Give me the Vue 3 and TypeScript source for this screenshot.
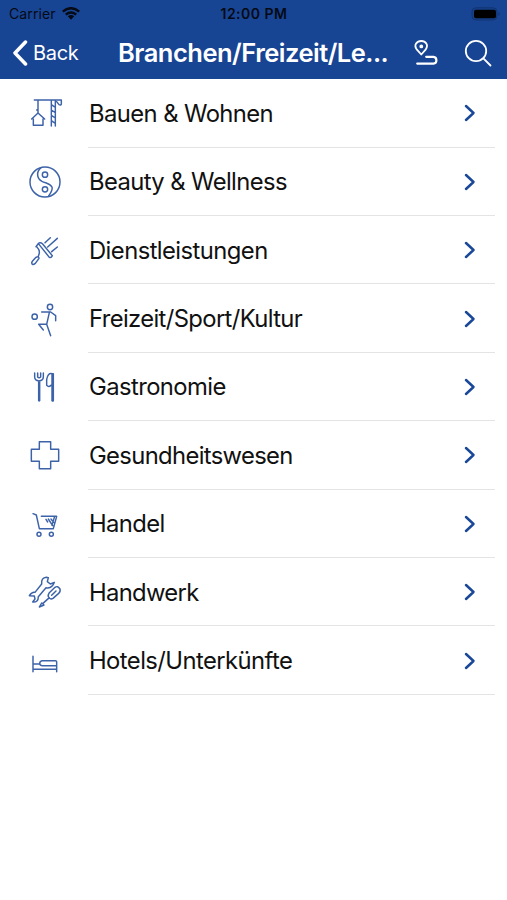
<script setup lang="ts">
interface Category {
  label: string
  spacing: number
  viewBox: string
  paths: string[]
  circles?: [number, number, number][]
}

const categories: Category[] = [
  {
    label: 'Bauen & Wohnen',
    spacing: -0.58,
    viewBox: '0 -5 150 150',
    paths: [
      'M43 31H124V43Q123 48 117 45L110 36M54 33V54Q55 61 50 61M54 57V69M35 88L54 70L74 88M40 88V107H69V88M94 33V109M106 33V109M94 45L106 53M94 61L106 69M94 77L106 85M94 93L106 101',
    ],
  },
  {
    label: 'Beauty & Wellness',
    spacing: -0.6,
    viewBox: '0 -1 150 150',
    paths: ['M63 31C49 43 49 63 66 72C78 78 89 77 96 89C99 97 93 106 86 116'],
    circles: [[75, 74, 45], [75, 52, 8], [75, 96, 8]],
  },
  {
    label: 'Dienstleistungen',
    spacing: -0.56,
    viewBox: '0 -1 150 150',
    paths: [
      'M57 57L88 96Q94 98 97 91L68 56Q60 49 54 56L48 64M50 64L56 72Q61 82 54 94M37 108L48 96Q56 91 57 99L46 114Q36 122 35 112ZM75 52L91 37M83 65L112 39M95 79L112 65',
    ],
  },
  {
    label: 'Freizeit/Sport/Kultur',
    spacing: -0.63,
    viewBox: '0 0 150 150',
    paths: ['M65 54H92L107 65V80M88 56L80 91L92 125M80 91H56L70 108'],
    circles: [[90, 39, 8], [44, 68, 8]],
  },
  {
    label: 'Gastronomie',
    spacing: -0.58,
    viewBox: '0 -1 150 150',
    paths: [
      'M44 32V44Q44 54 57 56Q70 54 70 44V32M53 32V44Q57 49 62 44V32M56 56V115Q57.500 117 59 115V56M96 115V34Q83 31 80 52V69Q87 76 94 68M96 115Q98 117 100 115V34H96',
    ],
  },
  {
    label: 'Gesundheitswesen',
    spacing: -0.65,
    viewBox: '0 0 150 150',
    paths: ['M58 35H92V58H116V94H92V116H58V94H34V58H58Z'],
  },
  {
    label: 'Handel',
    spacing: -0.62,
    viewBox: '0 1 150 150',
    paths: [
      'M39 45L49 49L58 90H100L110 53H64M78 62L83 70M85 61L98 81M93 61L101 71M103 56L96 80',
    ],
    circles: [[57, 107, 6], [94, 107, 6]],
  },
  {
    label: 'Handwerk',
    spacing: -0.68,
    viewBox: '0 -1 150 150',
    paths: [
      'M79 30Q63 31 65 50L45 75Q36 73 28 85L43 86L45 95L38 104Q55 106 55 88L78 61Q96 65 103 45L91 50L82 43L85 31ZM58 119L65 107L72 113ZM69 108L88 91M86 89Q82 86 88 76L105 60Q113 54 120 65Q122 74 116 78L99 93Q91 98 86 89M95 84L108 71',
    ],
  },
  {
    label: 'Hotels/Unterkünfte',
    spacing: -0.56,
    viewBox: '0 -3 150 150',
    paths: ['M39 58V104M39 81H60M39 97H110M110 104V74Q110 71 106 71H66Q59 72 59 80Q60 86 67 86H109'],
  },
]
</script>

<template>
  <main class="screen">
    <header class="top">
      <div class="status">
        <div class="carrier">
          <span class="carrier-name">Carrier</span>
          <svg class="wifi" viewBox="0 0 18 13">
            <path d="M.8 4.6Q9 -2.1 17.200 4.600M3.800 7.600Q9 3.400 14.200 7.600" fill="none" stroke="#050a14" stroke-width="2.5" />
            <path d="M5.8 9.3Q9 6.8 12.2 9.3L9 12.8Z" fill="#050a14" />
          </svg>
        </div>
        <span class="clock">12:00 PM</span>
        <div class="battery-wrap">
          <svg class="battery" viewBox="0 0 30 14">
            <rect x="1" y=".8" width="25" height="12.2" rx="4" fill="#15408a" stroke="#123473" />
            <rect x="3" y="2.8" width="22" height="8.4" rx="2" fill="#000" />
            <path d="M27.5 5Q30 7 27.5 9Z" fill="#123473" />
          </svg>
        </div>
      </div>
      <nav class="bar">
        <button class="back">
          <svg class="back-icon" viewBox="0 0 16 26">
            <path d="M13.5 2L3 13L13.5 24" fill="none" stroke="#fff" stroke-width="3.5" stroke-linecap="round" stroke-linejoin="round" />
          </svg>
          <span class="back-label">Back</span>
        </button>
        <h1 class="title">Branchen/Freizeit/Le...</h1>
        <svg class="route" viewBox="0 0 24 26">
          <path d="M7.3 14.5L2.9 9.7C-.8 4.8 3 1 7.3 1S15 4.8 11.6 9.7Z" />
          <circle cx="7.3" cy="6.4" r="1" />
          <path d="M12.2 16.8H19.5Q22.4 17 22.4 20.2T19.5 23.6H3.2" stroke-width="2.2" />
        </svg>
        <svg class="search" viewBox="0 0 28 28">
          <circle cx="12" cy="12" r="10.2" />
          <path d="M19.4 19.4L26.5 26.5" />
        </svg>
      </nav>
    </header>
    <ul class="list">
      <li v-for="item in categories" :key="item.label" class="row">
        <svg class="icon" :viewBox="item.viewBox">
          <path v-for="(d, i) in item.paths" :key="i" :d="d" />
          <circle v-for="([cx, cy, r], i) in item.circles ?? []" :key="`c${i}`" :cx="cx" :cy="cy" :r="r" />
        </svg>
        <div class="content">
          <span class="label" :style="{ letterSpacing: `${item.spacing}px` }">{{ item.label }}</span>
          <svg class="chevron" viewBox="0 0 12 18">
            <path d="M2 2L9.5 9L2 16" />
          </svg>
        </div>
      </li>
    </ul>
  </main>
</template>

<style>
body {
  background: #fff;
}
</style>

<style scoped>
.screen {
  width: 507px;
  height: 900px;
  overflow: hidden;
  background: #fff;
  color: #111;
  font-family: Inter, "Liberation Sans", sans-serif;
}
.top {
  box-sizing: border-box;
  height: 79.2px;
  background: #184494;
}
.status {
  display: grid;
  grid-template-columns: 1fr auto 1fr;
  align-items: center;
  height: 27px;
  padding: 0 6px 0 9px;
  color: #050a14;
  font-size: 14px;
  line-height: 27px;
}
.carrier {
  display: flex;
  align-items: center;
  gap: 6px;
}
.carrier-name {
  letter-spacing: 0.1px;
}
.wifi {
  width: 18px;
  height: 13px;
}
.clock {
  margin-right: 2px;
  font-weight: 600;
  letter-spacing: 0.5px;
}
.battery-wrap {
  display: flex;
  justify-content: flex-end;
}
.battery {
  width: 30px;
  height: 14px;
}
.bar {
  display: flex;
  align-items: center;
  height: 51px;
  color: #fff;
}
.back {
  display: flex;
  align-items: center;
  gap: 5px;
  width: 106px;
  margin-left: 12px;
  padding: 0;
  border: 0;
  background: none;
  color: inherit;
  font: inherit;
}
.back-icon {
  width: 16px;
  height: 26px;
}
.back-label {
  font-size: 20px;
  letter-spacing: -0.3px;
}
.title {
  width: 295px;
  margin: 0;
  font-size: 25.5px;
  font-weight: 600;
  letter-spacing: -0.5px;
  line-height: 51px;
  white-space: nowrap;
}
.route,
.search {
  flex: none;
  fill: none;
  stroke: #fff;
  stroke-width: 1.8;
  stroke-linecap: round;
  stroke-linejoin: round;
}
.route {
  width: 24px;
  height: 26px;
  margin: 1px 0 0 1px;
}
.search {
  width: 28px;
  height: 28px;
  margin-left: 26px;
}
.list {
  margin: 0;
  padding: 0 12px 0 0;
  list-style: none;
}
.row {
  display: flex;
  align-items: center;
  height: 68.4px;
}
.icon {
  flex: none;
  width: 50px;
  height: 50px;
  margin: 0 18px 0 20px;
  fill: none;
  stroke: #3c62a8;
  stroke-width: 4.4;
  stroke-linecap: round;
  stroke-linejoin: round;
}
.content {
  box-sizing: border-box;
  display: flex;
  flex: 1;
  align-items: center;
  justify-content: space-between;
  height: 100%;
  padding: 1px 19px 0 1px;
  border-bottom: 1px solid #e4e4e4;
}
.label {
  font-size: 23.8px;
  white-space: nowrap;
}
.chevron {
  width: 12px;
  height: 18px;
  fill: none;
  stroke: #1a4899;
  stroke-width: 2.5;
  stroke-linecap: round;
  stroke-linejoin: round;
}
</style>
